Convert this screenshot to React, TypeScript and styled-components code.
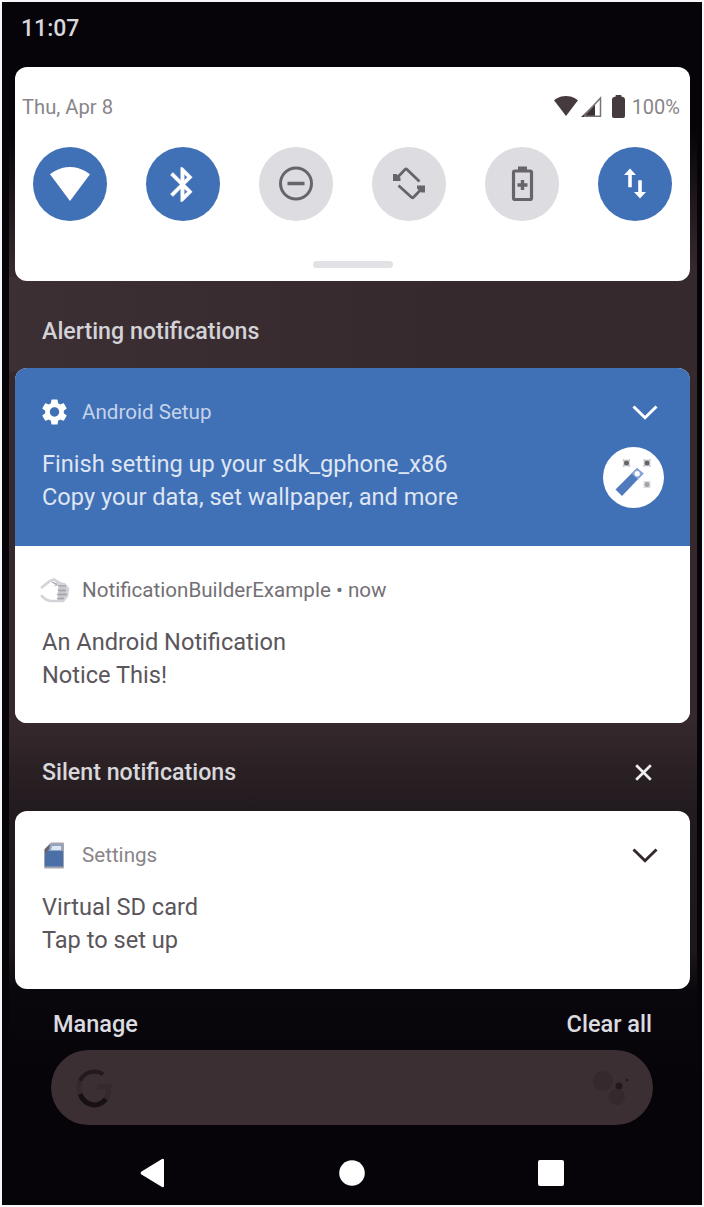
import React from "react";
import styled, { createGlobalStyle } from "styled-components";

const BLUE = "#4070b6";

const GlobalStyle = createGlobalStyle`
  body { margin: 0; background: #fff; font-family: Roboto, "Liberation Sans", sans-serif; }
  * { box-sizing: border-box; }
  svg { display: block; flex: none; }
`;

const Page = styled.div`
  width: 704px;
  height: 1207px;
  padding: 2px;
  background: #f7f7f9;
`;

const Screen = styled.div`
  width: 700px;
  height: 1203px;
  padding: 0 7px 0 7px;
  background: #060409;
  display: flex;
  flex-direction: column;
`;

const Shade = styled.main`
  flex: 1;
  display: flex;
  flex-direction: column;
  width: 688px;
  padding: 0 7px 0 6px;
  background:
    linear-gradient(to right, rgba(100, 90, 94, 0.13), rgba(55, 42, 46, 0) 65%) 0 275px / 100% 95px no-repeat,
    linear-gradient(#060409 0, #060409 128px, #36292d 265px, #36292d 715px, #211a1e 810px, #1d161a 950px, #0a070c 990px, #060409 1080px);
`;

const Label = styled.span<{ $size: number; $color: string; $weight?: number }>`
  font-size: ${(p) => p.$size}px;
  font-weight: ${(p) => p.$weight ?? 400};
  color: ${(p) => p.$color};
  white-space: pre;
`;

const Clock = styled.header`
  height: 65px;
  flex: none;
  padding: 12px 0 0 6px;
  line-height: 30px;
`;

const Card = styled.section<{ $height: number }>`
  height: ${(p) => p.$height}px;
  flex: none;
  border-radius: 12px;
  overflow: hidden;
  background: #fff;
`;

const QuickSettings = styled(Card)`
  display: flex;
  flex-direction: column;
  align-items: center;
`;

const StatusRow = styled.div`
  align-self: stretch;
  height: 80px;
  padding: 26px 10px 0 7px;
  display: flex;
  justify-content: space-between;
  line-height: 28px;
`;

const StatusIcons = styled.div`
  display: flex;
  align-items: flex-start;
  svg { margin-top: 3px; }
  svg:nth-child(1) { margin-right: 3px; }
  svg:nth-child(2) { margin-right: 10px; }
  svg:nth-child(3) { margin: 2px 7px 0 0; }
`;

const Tiles = styled.div`
  width: 639px;
  margin-right: 1px;
  display: flex;
  justify-content: space-between;
`;

const Tile = styled.button<{ $on?: boolean }>`
  width: 74px;
  height: 74px;
  padding: 0;
  border: 0;
  border-radius: 50%;
  display: flex;
  align-items: center;
  justify-content: center;
  background: ${(p) => (p.$on ? BLUE : "#dcdce1")};
  color: ${(p) => (p.$on ? "#fff" : "#68656a")};
`;

const Handle = styled.div`
  width: 80px;
  height: 7px;
  margin-top: 40px;
  border-radius: 4px;
  background: #e2e2e6;
`;

const SectionHeader = styled.div<{ $height: number; $offset: number }>`
  height: ${(p) => p.$height}px;
  flex: none;
  padding: ${(p) => p.$offset}px 38px 0 27px;
  display: flex;
  align-items: center;
  justify-content: space-between;
`;

const Notification = styled.article<{ $accent?: boolean; $height: number }>`
  height: ${(p) => p.$height}px;
  padding: 28px 32px 0 27px;
  background: ${(p) => (p.$accent ? BLUE : "#fff")};
`;

const AppRow = styled.div`
  display: flex;
  align-items: center;
  height: 32px;
`;

const AppIcon = styled.div<{ $shift?: number }>`
  width: 40px;
  display: flex;
  svg { margin-left: ${(p) => p.$shift ?? 0}px; }
`;

const Spacer = styled.div`
  flex: 1;
`;

const Body = styled.div`
  display: flex;
  justify-content: space-between;
  padding-top: 19px;
`;

const Lines = styled.div`
  display: flex;
  flex-direction: column;
  padding-top: 1px;
  line-height: 33px;
`;

const Badge = styled.div`
  width: 61px;
  height: 61px;
  margin: 0 -6px 0 0;
  border-radius: 50%;
  background: #fff;
`;

const Footer = styled.div`
  height: 61px;
  flex: none;
  padding: 8px 38px 0 38px;
  display: flex;
  align-items: center;
  justify-content: space-between;
`;

const SearchPill = styled.div`
  width: 602px;
  height: 75px;
  flex: none;
  margin-left: 36px;
  padding: 0 24px;
  border-radius: 38px;
  background: #3b2f33;
  display: flex;
  align-items: center;
  justify-content: space-between;
`;

const NavBar = styled.nav`
  height: 80px;
  flex: none;
  padding: 15px 126px 0 125px;
  display: flex;
  align-items: center;
  justify-content: space-between;
`;

const Wifi = ({ w, h, color }: { w: number; h: number; color: string }) => (
  <svg width={w} height={h} viewBox="0.36 3 23.28 18.5" preserveAspectRatio="none">
    <path fill={color} d="M12.01 21.49L23.64 7c-.45-.34-4.93-4-11.64-4C5.28 3 .81 6.66.36 7l11.63 14.49.01.01.01-.01z" />
  </svg>
);

const Bluetooth = () => (
  <svg width="41" height="41" viewBox="0 0 24 24" fill="currentColor" stroke="currentColor" strokeWidth="0.3">
    <path d="M17.71 7.71L12 2h-1v7.59L6.41 5 5 6.41 10.59 12 5 17.59 6.41 19 11 14.41V22h1l5.71-5.71-4.3-4.29 4.3-4.29zM13 5.83l1.88 1.88L13 9.59V5.83zm1.88 10.46L13 18.17v-3.76l1.88 1.88z" />
  </svg>
);

const DoNotDisturb = () => (
  <svg width="40" height="40" viewBox="0 0 40 40" fill="none" stroke="currentColor">
    <circle cx="20" cy="19.5" r="15.5" strokeWidth="3" />
    <path d="M11.5 19.5h17" strokeWidth="3.6" />
  </svg>
);

const Rotate = () => (
  <svg width="40" height="40" viewBox="0 0 40 40" fill="none" stroke="currentColor" strokeWidth="2.8">
    <path d="M8 14l8-8.500q1-1 2 0L30.500 17.500M9.500 21.500L22.500 33.300q1 1 2 0L32 25.500" />
    <path d="M4 10h3.500l4 4v3H4zM36 28.500h-3.500l-4.500-4v-3h8z" fill="currentColor" stroke="none" />
  </svg>
);

const BatterySaver = () => (
  <svg width="40" height="40" viewBox="0 0 40 40" fill="none" stroke="currentColor">
    <rect x="11.500" y="7" width="18" height="28.500" rx="1.500" strokeWidth="3.200" />
    <path d="M16 2.500h9v4h-9z" fill="currentColor" stroke="none" />
    <path d="M20.500 16v10M15.500 21h10" strokeWidth="3.400" />
  </svg>
);

const MobileData = () => (
  <svg width="40" height="40" viewBox="0 0 40 40" fill="currentColor">
    <path d="M15 4.500l6 6.500h-4.200v12.200h-3.600V11H9zM25 34.500l-6-6.500h4.200V16.300h3.600V28H31z" />
  </svg>
);

const Signal = () => (
  <svg width="21" height="22" viewBox="0 0 21 22">
    <path d="M0 21L14 7.500V21z" fill="#3b3034" />
    <path d="M3 20L19.500 2V20.200H3" fill="none" stroke="#77737a" strokeWidth="1.500" />
  </svg>
);

const Battery = () => (
  <svg width="13" height="23" viewBox="0 0 14 23" preserveAspectRatio="none" fill="#453a3e">
    <path d="M4 0h6v1.500q4 .5 4 3V21q0 2-2 2H2q-2 0-2-2V4.500q0-2.500 4-3z" />
  </svg>
);

const Gear = () => (
  <svg width="27" height="28" viewBox="1.6 1.3 20.8 21.4" fill="#fff">
    <path d="M19.140 12.940c.04-.3.060-.610.060-.940 0-.32-.02-.64-.07-.940l2.030-1.580c.18-.14.23-.41.12-.610l-1.920-3.320c-.12-.22-.37-.29-.59-.22l-2.390.96c-.5-.38-1.030-.7-1.620-.940l-.36-2.540c-.04-.24-.24-.41-.48-.41h-3.840c-.24 0-.43.17-.47.41l-.36 2.540c-.59.240-1.130.570-1.620.940l-2.390-.96c-.22-.08-.47 0-.59.22L2.740 8.870c-.12.210-.08.470.12.610l2.030 1.580c-.05.3-.09.630-.09.940s.020.640.07.940l-2.030 1.580c-.18.140-.23.410-.12.610l1.920 3.320c.12.220.37.290.59.220l2.390-.96c.5.380 1.030.7 1.620.940l.36 2.540c.05.240.24.410.48.410h3.840c.24 0 .44-.17.47-.41l.36-2.540c.59-.24 1.130-.56 1.620-.940l2.390.96c.22.080.47 0 .59-.22l1.920-3.320c.12-.22.070-.47-.12-.610l-2.010-1.580zM12 15.600c-1.980 0-3.600-1.620-3.600-3.600s1.620-3.600 3.600-3.600 3.600 1.620 3.600 3.600-1.620 3.600-3.600 3.600z" />
  </svg>
);

const Chevron = ({ color }: { color: string }) => (
  <svg width="26" height="16" viewBox="0 0 26 16" fill="none" stroke={color} strokeWidth="3">
    <path d="M1.500 2.500L13 13.700 24.500 2.500" />
  </svg>
);

const Wand = () => (
  <svg width="61" height="61" viewBox="0 0 61 61">
    <path d="M12.500 42.500L34 21l6.500 5.500L19 49z" fill="#4f7bbe" />
    <path d="M28.500 26.500l5.500-5.500 6.500 5.500-5.500 6z" fill="#86a7dc" />
    <circle cx="34.200" cy="26.700" r="2.600" fill="#fff" />
    <g fill="#dcdce1">
      <path d="M20 12.500h7v7h-7zM40.500 12.500h7v7h-7zM40.500 34h7v7h-7z" />
    </g>
    <g fill="none" stroke="#c3c2c7" strokeWidth="1.500">
      <path d="M20 12.500l7 7m0-7l-7 7M40.500 12.500l7 7m0-7l-7 7" />
    </g>
    <circle cx="23.500" cy="16" r="2.500" fill="#68656a" />
    <circle cx="44" cy="16" r="2.500" fill="#68656a" />
    <circle cx="44" cy="37.500" r="2.500" fill="#a5a3a8" />
  </svg>
);

const Hand = () => (
  <svg width="30" height="25" viewBox="0 0 30 25" fill="none">
    <path d="M15 4l4 1.500 7 2 2.500 4-1 6-3 4.500-8 1.500 2-4-2-3 2-3-1-2.500 2-3z" fill="#c9c8cd" />
    <path d="M1 10L10 3l4-1.500L18 4l-2 3h10M1 17.500l5 4 4 1.500h13l4-5 1-7-3-4.500-7-2" stroke="#d3d3d8" strokeWidth="2.600" />
    <path d="M12 4l5 2.500M18 7.800h8M18 12.500h8M18 16.500h9M17 20.500h7" stroke="#a5a3a8" strokeWidth="1.300" />
  </svg>
);

const SdCard = () => (
  <svg width="26" height="27" viewBox="-3 0 26 27">
    <path d="M8 .5h12q1 0 1 1V25q0 1.500-1.500 1.500h-17Q1 26.500 1 25V7.500z" fill="#a5a6ac" />
    <path d="M2 9h18v15.500H2z" fill="#4b70a8" />
    <path d="M9 2.500h10V9H3z" fill="#86a4cf" />
    <path d="M9 4h9v4H8z" fill="#dfe5ef" />
    <path d="M7 2L2 7v5l4-4z" fill="#68656a" />
  </svg>
);

const Close = () => (
  <svg width="17" height="17" viewBox="0 0 17 17" fill="none" stroke="#eeeef1" strokeWidth="2.700">
    <path d="M1.200 1.200l14.600 14.600M15.800 1.200L1.200 15.800" />
  </svg>
);

const SearchLogo = () => (
  <svg width="40" height="40" viewBox="0 0 40 40" fill="none" strokeWidth="5">
    <path d="M5 13Q9 4 19 3.500q6 0 9 3" stroke="#211a1e" strokeWidth="4" />
    <path d="M5 26q4 10 14 11 7 0 12-6" stroke="#171116" />
    <path d="M5 13q-2 6 0 13M22 19h12q0 6-3 12" stroke="#36292d" />
  </svg>
);

const Assistant = () => (
  <svg width="40" height="40" viewBox="0 0 40 40" fill="#36292d">
    <circle cx="14" cy="13" r="10" />
    <circle cx="28" cy="29" r="8" />
    <circle cx="30" cy="18" r="3.500" fill="#1f181c" />
    <circle cx="38" cy="12" r="1.500" fill="#241c20" />
  </svg>
);

const App = () => (
  <Page>
    <GlobalStyle />
    <Screen>
      <Shade>
        <Clock>
          <Label $size={23} $weight={500} $color="#d8d8dc">11:07</Label>
        </Clock>
        <QuickSettings $height={214}>
          <StatusRow>
            <Label $size={20.2} $color="#88858a">Thu, Apr 8</Label>
            <StatusIcons>
              <Wifi w={24} h={20} color="#453a3e" />
              <Signal />
              <Battery />
              <Label $size={20} $color="#88858a">100%</Label>
            </StatusIcons>
          </StatusRow>
          <Tiles>
            <Tile $on><Wifi w={40} h={34} color="#fff" /></Tile>
            <Tile $on><Bluetooth /></Tile>
            <Tile><DoNotDisturb /></Tile>
            <Tile><Rotate /></Tile>
            <Tile><BatterySaver /></Tile>
            <Tile $on><MobileData /></Tile>
          </Tiles>
          <Handle />
        </QuickSettings>
        <SectionHeader $height={87} $offset={12}>
          <Label $size={23.2} $weight={500} $color="#d3d2d6">Alerting notifications</Label>
        </SectionHeader>
        <Card $height={355}>
          <Notification $accent $height={178}>
            <AppRow>
              <AppIcon $shift={-1.5}><Gear /></AppIcon>
              <Label $size={20.6} $color="#c5d3ea">Android Setup</Label>
              <Spacer />
              <Chevron color="#fff" />
            </AppRow>
            <Body>
              <Lines>
                <Label $size={23.6} $color="#dfe5f2">Finish setting up your sdk_gphone_x86</Label>
                <Label $size={23.6} $color="#dfe5f2">Copy your data, set wallpaper, and more</Label>
              </Lines>
              <Badge><Wand /></Badge>
            </Body>
          </Notification>
          <Notification $height={177}>
            <AppRow>
              <AppIcon $shift={-2}><Hand /></AppIcon>
              <Label $size={20.6} $color="#737075">NotificationBuilderExample • now</Label>
            </AppRow>
            <Body>
              <Lines>
                <Label $size={23.6} $color="#5a565b">An Android Notification</Label>
                <Label $size={23.6} $color="#5a565b">Notice This!</Label>
              </Lines>
            </Body>
          </Notification>
        </Card>
        <SectionHeader $height={88} $offset={10}>
          <Label $size={23.2} $weight={500} $color="#d8d8dc">Silent notifications</Label>
          <Close />
        </SectionHeader>
        <Card $height={178}>
          <Notification $height={178}>
            <AppRow>
              <AppIcon $shift={-2}><SdCard /></AppIcon>
              <Label $size={20.6} $color="#88858a">Settings</Label>
              <Spacer />
              <Chevron color="#36292d" />
            </AppRow>
            <Body>
              <Lines>
                <Label $size={23.6} $color="#5a565b">Virtual SD card</Label>
                <Label $size={23.6} $color="#5a565b">Tap to set up</Label>
              </Lines>
            </Body>
          </Notification>
        </Card>
        <Footer>
          <Label $size={23.5} $weight={500} $color="#dcdce0">Manage</Label>
          <Label $size={23.5} $weight={500} $color="#dcdce0">Clear all</Label>
        </Footer>
        <SearchPill>
          <SearchLogo />
          <Assistant />
        </SearchPill>
        <NavBar>
          <svg width="25" height="30" viewBox="0 0 25 30" fill="#fff">
            <path d="M24 1.500v27q-1 1-2 .5L1.500 16.500q-1.800-1.500 0-3L22 1q1-.5 2 .5z" />
          </svg>
          <svg width="26" height="26" viewBox="0 0 26 26" fill="#fff">
            <circle cx="13" cy="13" r="12.800" />
          </svg>
          <svg width="26" height="26" viewBox="0 0 26 26" fill="#fff">
            <rect width="26" height="26" rx="2" />
          </svg>
        </NavBar>
      </Shade>
    </Screen>
  </Page>
);

export default App;
